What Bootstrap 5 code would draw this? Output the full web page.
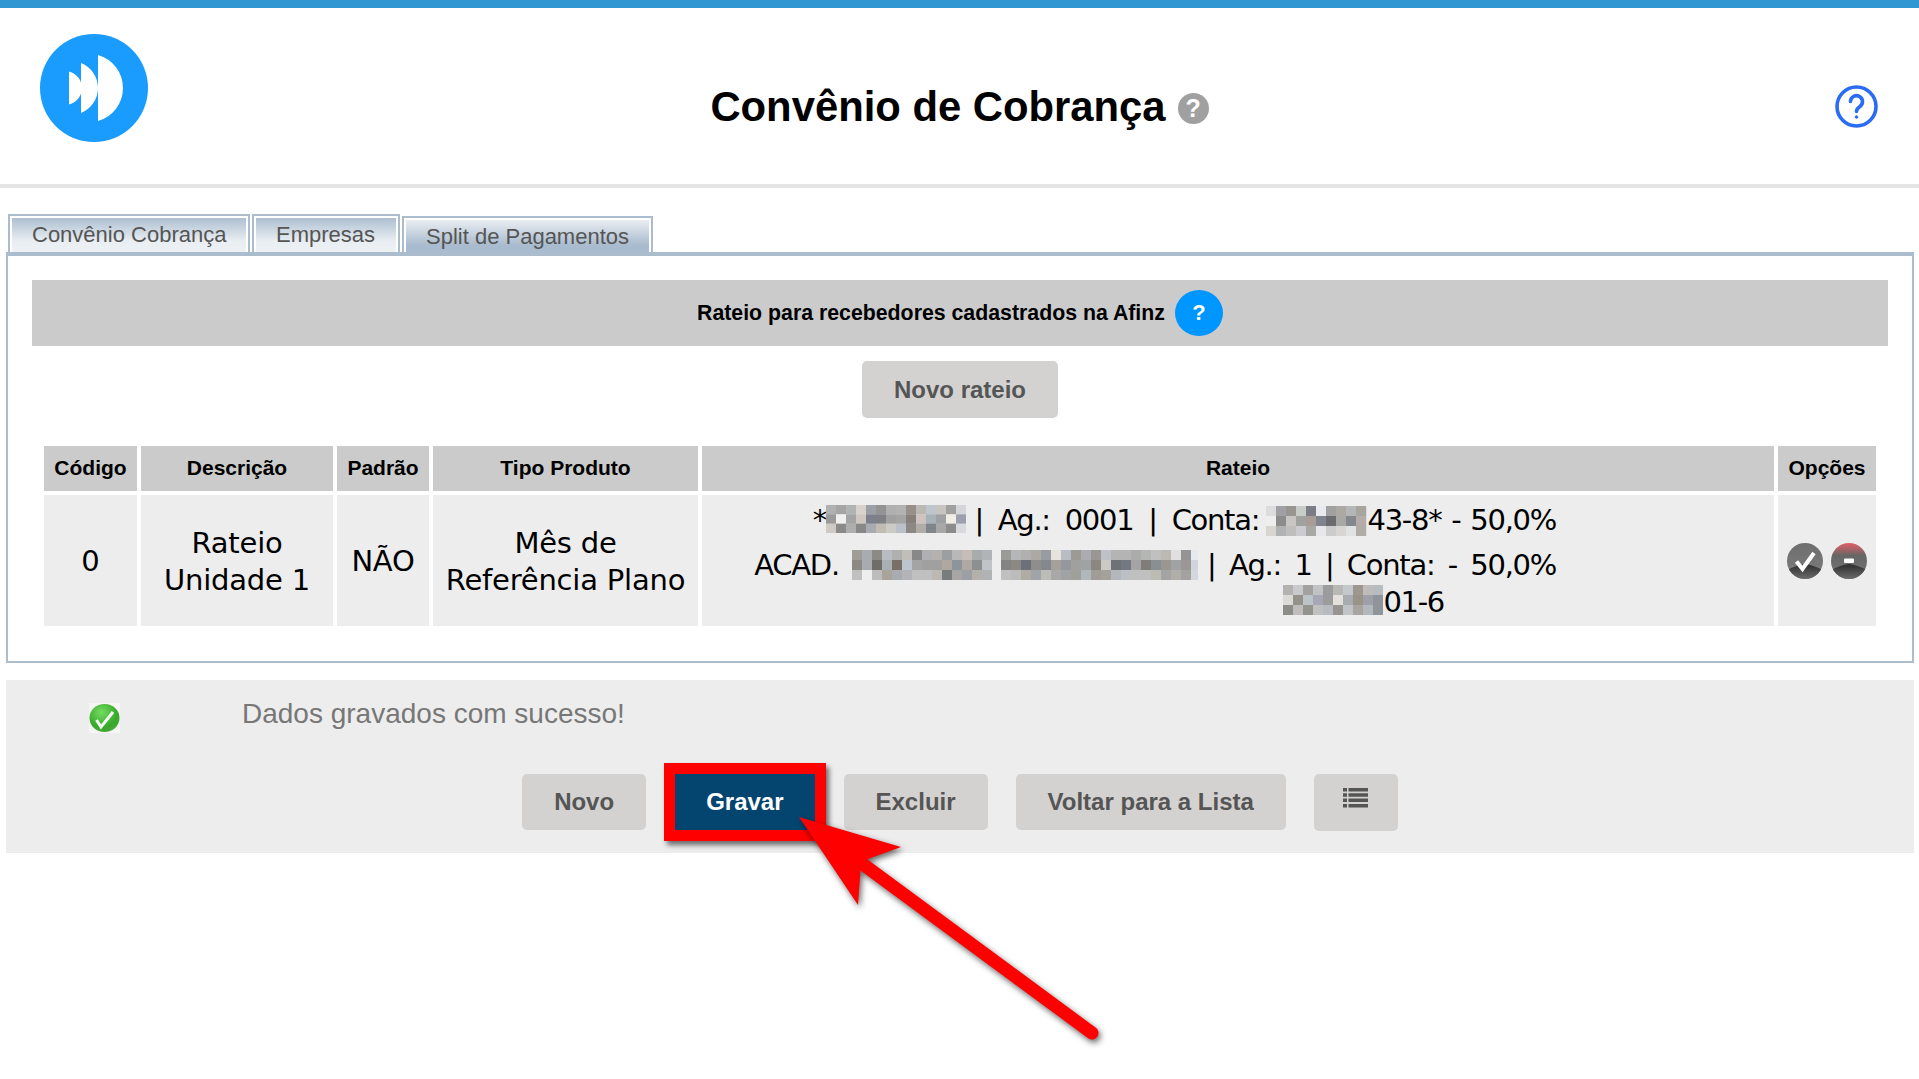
<!DOCTYPE html>
<html lang="pt-BR">
<head>
<meta charset="utf-8">
<title>Convênio de Cobrança</title>
<link href="https://cdn.jsdelivr.net/npm/bootstrap@5.3.0/dist/css/bootstrap.min.css" rel="stylesheet">
<style>
html,body{background:#fff;}
body{margin:0;min-height:1079px;position:relative;font-family:"Liberation Sans",Arial,sans-serif;color:#000;overflow:hidden;}
.faixa-topo{height:8px;background:#3197d3;}
.cabecalho{height:176px;display:grid;grid-template-columns:1fr auto 1fr;border-bottom:0;}
.logo-area{padding:26px 0 0 40px;}
.logo-area svg{display:block;}
.titulo-area{display:flex;align-items:center;gap:12px;padding-top:46px;height:176px;padding-bottom:24px;}
.titulo-area h1{font:700 41.8px/1.2 "Liberation Sans",Arial,sans-serif;margin:0;color:#000;}
.ajuda-cinza{width:31px;height:31px;border-radius:50%;background:#a0a0a0;color:#fff;font:700 25px/31px "Liberation Sans",sans-serif;text-align:center;margin-top:3px;}
.ajuda-area{display:flex;justify-content:flex-end;padding:77px 41px 0 0;}
.ajuda-area svg{display:block;}
.divisor{height:4px;background:#e5e5e5;}
.abas{margin:26px 0 0 8px;gap:2px;align-items:flex-end;flex-wrap:nowrap;height:38px;}
.aba{display:block;height:38px;border:2px solid #abbccd;border-bottom:0;box-shadow:inset 0 2px 0 #fff,inset 2px 0 0 #fff,inset -2px 0 0 #fff;background:linear-gradient(#a9bbce,#e9eef2 70%,#edf1f4);font-size:22px;line-height:38px;color:#555;padding:0 0 0 22px;white-space:nowrap;text-decoration:none;}
.aba-1{width:242px;}
.aba-2{width:148px;}
.aba-ativa{height:36px;width:251px;background:linear-gradient(#eef1f5,#a9bbce 80%);line-height:38px;}
.painel{margin:0 5px 0 6px;border:2px solid #abbccd;border-top-width:4px;padding:24px 24px 31px;}
.barra-titulo{height:66px;background:#cbcbcb;font-weight:700;font-size:21.3px;gap:10px;}
.barra-titulo>span:first-child{padding-top:2px;}
.ajuda-azul{width:48px;height:46px;border-radius:50%;background:#0096ff;color:#fff;font:700 22px/46px "Liberation Sans",sans-serif;text-align:center;}
.botao{height:56px;padding:0 32px;border:0;border-radius:5px;background:#d3d2d0;color:#555;font:700 24px/56px "Liberation Sans",Arial,sans-serif;}
.botao:hover{background:#d3d2d0;color:#555;}
.novo-rateio{height:57px;margin:15px auto 24px;display:block;}
.grade.table{width:1840px;margin:0 8px;border-collapse:separate;border-spacing:4px;table-layout:fixed;}
.grade col:nth-child(1){width:93px;}
.grade col:nth-child(2){width:192px;}
.grade col:nth-child(3){width:92px;}
.grade col:nth-child(4){width:265px;}
.grade col:nth-child(5){width:1072px;}
.grade col:nth-child(6){width:98px;}
.grade.table>:not(caption)>*>*{padding:0;border:0;box-shadow:none;text-align:center;vertical-align:middle;color:#000;}
.grade.table>thead>tr>th{height:45px;background:#cbcbcb;font-size:21px;font-weight:700;line-height:1.2;padding-bottom:2px;}
.grade.table>tbody>tr>td{height:131px;background:#ededed;font-family:"DejaVu Sans",sans-serif;font-size:29px;line-height:37px;letter-spacing:-.2px;}
.grade.table>tbody>tr>td:nth-child(-n+4){padding-top:2px;}
.grade.table>tbody>tr>td.celula-rateio{padding-top:2px;}
.linhas{width:802px;margin-left:52px;text-align:right;white-space:nowrap;letter-spacing:-1.3px;word-spacing:5.5px;}
.linhas p{margin:0;}
.linhas p:first-child{margin-bottom:8px;}
.linhas p:last-child{padding-right:112px;}
.trecho-meio{word-spacing:7px;}
.trecho-fim{word-spacing:2px;}
.mosaico{display:inline-block;}
.mos-a{vertical-align:-3px;margin-right:-5px;}
.mos-d{vertical-align:-6px;margin-left:-7px;}
.mos-b{vertical-align:-5px;}
.mos-c{vertical-align:-5px;margin-left:-5px;margin-right:-4px;}
.mos-e{vertical-align:-3px;}
.opcoes{display:flex;justify-content:center;gap:8px;}
.opcoes svg{display:block;}
.rodape{margin:17px 5px 0 6px;height:173px;background:#ededed;padding-top:23px;}
.mensagem{display:flex;height:71px;padding-left:83px;}
.mensagem svg{display:block;flex:none;}
.mensagem span{margin-left:122px;font-size:28px;line-height:22px;color:#777;}
.acoes{display:flex;justify-content:center;gap:28px;}
.gravar{background:#04456f;color:#fff;padding:0 31px;margin-right:1px;margin-left:1px;box-shadow:0 0 0 11px #f00,3px 4px 5px 11px rgba(0,0,0,.55);border-radius:0;position:relative;}
.gravar:hover{background:#04456f;color:#fff;}
.lista{height:57px;width:84px;padding:0;display:flex;justify-content:center;}
.lista svg{margin-top:14px;}
.seta{position:absolute;left:0;top:0;pointer-events:none;filter:drop-shadow(2px 3px 3px rgba(0,0,0,.6));}
</style>
</head>
<body>
<div class="faixa-topo"></div>
<header class="cabecalho">
  <div class="logo-area">
    <svg width="108" height="108" viewBox="0 0 108 108"><circle cx="54" cy="54" r="54" fill="#1a9bfe"/><path fill="#fff" d="M58 21A34.300 34.300 0 0 1 58 87ZM41 29A26.900 26.900 0 0 1 41 79ZM29 37.500A17 17 0 0 1 29 70.500Z"/></svg>
  </div>
  <div class="titulo-area"><h1>Convênio de Cobrança</h1><div class="ajuda-cinza">?</div></div>
  <div class="ajuda-area">
    <svg width="43" height="43" viewBox="0 0 43 43" fill="none" stroke="#2a6df4" stroke-width="3.600"><circle cx="21.500" cy="21.500" r="19.500"/><path stroke-linecap="round" d="M15.500 16.500a6 6 0 1 1 9.500 5c-2.300 1.500-3.500 2.700-3.500 5"/><circle cx="21.500" cy="32" r="1.300" fill="#2a6df4" stroke-width="1"/></svg>
  </div>
</header>
<div class="divisor"></div>
<ul class="nav abas">
  <li class="nav-item"><a class="aba aba-1" href="#">Convênio Cobrança</a></li>
  <li class="nav-item"><a class="aba aba-2" href="#">Empresas</a></li>
  <li class="nav-item"><a class="aba aba-ativa" href="#">Split de Pagamentos</a></li>
</ul>
<section class="painel">
  <div class="barra-titulo d-flex align-items-center justify-content-center"><span>Rateio para recebedores cadastrados na Afinz</span><span class="ajuda-azul">?</span></div>
  <button type="button" class="btn botao novo-rateio">Novo rateio</button>
  <table class="table grade">
    <colgroup><col><col><col><col><col><col></colgroup>
    <thead><tr><th>Código</th><th>Descrição</th><th>Padrão</th><th>Tipo Produto</th><th>Rateio</th><th>Opções</th></tr></thead>
    <tbody>
      <tr>
        <td>0</td>
        <td>Rateio<br>Unidade 1</td>
        <td>NÃO</td>
        <td>Mês de<br>Referência Plano</td>
        <td class="celula-rateio">
          <div class="linhas">
            <p>*<svg class="mosaico mos-a" data-m="a" width="140" height="28"></svg> <span class="trecho-meio">| Ag.: 0001 | Conta:</span> <svg class="mosaico mos-d" data-m="d" width="102" height="30"></svg><span class="trecho-fim">43-8* - 50,0%</span></p>
            <p>ACAD. <svg class="mosaico mos-b" data-m="b" width="140" height="30"></svg> <svg class="mosaico mos-c" data-m="c" width="197" height="30"></svg> | Ag.: 1 | Conta: - 50,0%</p>
            <p><svg class="mosaico mos-e" data-m="e" width="100" height="30"></svg>01-6</p>
          </div>
        </td>
        <td>
          <div class="opcoes">
            <svg width="36" height="36" viewBox="0 0 36 36"><defs><linearGradient id="gc" x1="0" y1="0" x2="0" y2="1"><stop offset="0" stop-color="#6e6e6e"/><stop offset=".6" stop-color="#777"/><stop offset="1" stop-color="#8a8a8a"/></linearGradient><linearGradient id="gd" x1="0" y1="0" x2="0" y2="1"><stop offset="0" stop-color="#2c2c2c"/><stop offset="1" stop-color="#6c6c6c"/></linearGradient><linearGradient id="gr" x1="0" y1="0" x2="0" y2="1"><stop offset="0" stop-color="#e45f68"/><stop offset=".35" stop-color="#666"/><stop offset="1" stop-color="#777"/></linearGradient><clipPath id="cc"><circle cx="18" cy="18" r="18"/></clipPath></defs><circle cx="18" cy="18" r="18" fill="url(#gc)"/><path clip-path="url(#cc)" fill="url(#gd)" d="M0 27Q10 22 18 21Q26 22 36 27V36H0Z"/><path d="M9.500 18.500L15.500 26L27 10" fill="none" stroke="#fff" stroke-width="4"/></svg>
            <svg width="36" height="36" viewBox="0 0 36 36"><circle cx="18" cy="18" r="18" fill="url(#gr)"/><path clip-path="url(#cc)" fill="url(#gd)" d="M0 27Q10 22 18 21Q26 22 36 27V36H0Z"/><rect x="13" y="15.500" width="10" height="4.500" rx="1" fill="#fff"/></svg>
          </div>
        </td>
      </tr>
    </tbody>
  </table>
</section>
<section class="rodape">
  <div class="mensagem">
    <svg width="31" height="30" viewBox="0 0 31 30"><defs><radialGradient id="gv" cx=".4" cy=".3" r=".75"><stop offset="0" stop-color="#74dc62"/><stop offset=".7" stop-color="#38a82a"/><stop offset="1" stop-color="#4aa83c"/></radialGradient></defs><rect width="31" height="30" fill="#f5f5f3"/><ellipse cx="15.500" cy="15" rx="15" ry="14" fill="url(#gv)"/><path d="M7.500 17l4.500 7L24 9" fill="none" stroke="#f4fbf2" stroke-width="3"/></svg>
    <span>Dados gravados com sucesso!</span>
  </div>
  <div class="acoes">
    <button type="button" class="btn botao">Novo</button>
    <button type="button" class="btn botao gravar">Gravar</button>
    <button type="button" class="btn botao">Excluir</button>
    <button type="button" class="btn botao">Voltar para a Lista</button>
    <button type="button" class="btn botao lista" aria-label="Lista"><svg width="25" height="20" viewBox="0 0 25 20" fill="#555"><path d="M0 0h4v3.500H0zM5.500 0H25v3.500H5.500zM0 5.300h4v3.500H0zM5.500 5.300H25v3.500H5.500zM0 10.600h4v3.500H0zM5.500 10.600H25v3.500H5.500zM0 16h4v3.500H0zM5.500 16H25v3.500H5.500z"/></svg></button>
  </div>
</section>
<svg class="seta" width="1919" height="1079" viewBox="0 0 1919 1079"><path fill="#f00" d="M799 817L901 847L868 859L860.500 870L858 905Z"/><path d="M864 865L1092 1033" stroke="#f00" stroke-width="13" stroke-linecap="round"/></svg>
<script>
var M={
a:["b0b0b0 a5a5a5 b0b4b4 d8d2cc 9ca0a4 939393 b0b0b0 b3b3b3 968f8a bcb8b4 c0c4cc c8c4c0 a0a0a0 d4d6dc","9a9a9a f0f0f0 a4a4a4 cfc8c0 7c808c 7e8084 a0a0a0 a4a4a4 85807a cdc4c0 a8b0b8 a0a0a0 f0ece6 9ca0ac","cfcac6 8a8a8a aeaeae 888888 a8acb0 c0bcb4 cccac6 bcc0c8 8c8884 b0aca8 80858a a8a8a8 8c8c8c d8dade"],
b:["a09c98 a8acb0 8c8a84 b8bcc0 b0b0b0 c0beb8 888888 b0b0b4 b4b2ae 9c9ea0 b8b8b8 c8bcb8 a8acac b0b4b8","8c8884 a8acb0 706c68 a8b0b4 787068 bcc4d0 a4a4a4 a0a0a0 a0a0a0 b0a8a0 8c949c b0a8a0 8c9090 c0c4c8","c0c0c0 eeeeee bcbcbc a8a49c a8acb0 b4b4b8 c0c0c0 c0c0c0 bcb8b4 787c7c a8a6a4 9ca0a4 b4b0ac b0b2b4"],
c:["9a9a96 b4b6b8 b0b0b0 aca8a4 989ca0 e6e2dc b8bcc4 9c9a94 acacb0 9a9692 c0c0c8 b4b4b4 b4b4b4 acacac b4b6b4 c0c0c0 bcb8b4 e0e0e0 949494 e6eaee","848484 8c8884 6c7078 908e8a 84888c a4a09c 94989c a0a09e a0a2a4 8a8680 ccc8c4 6c7278 747880 a4a4a4 807c78 889094 9a9690 a0a2a4 9a9896 d0d4dc","c0c0c0 bcbcbc b0aca4 a0a4a8 bcbcb8 a8a8a8 a0a2a4 a0a09a b0b8bc a09c98 a4a09a b4b8bc bcc0c4 c0c0c0 c0c0c0 bcbcb4 a4a4a4 b0aea8 a4a2a0 d4d8dc"],
d:["dcdcdc a0a0a4 989490 c8ccc8 7c7c84 e8eaf0 a0a0a0 aca8a4 b4b6b8 a8a49e","eeeeee 8c8c8c c8c6c4 a0a2a0 a89c98 80848c 6c6c70 a8a8a4 84888c b4aca8","d8d4d0 b0b2b4 c0bebc ccccd0 a8a8a4 e8e8ec cccccc d8d6d2 e0e2e4 b0aca8"],
e:["b4b2b0 c8cacc a4a2a0 c0c2c4 9c9c9c b8b8b4 c4c8cc 9c9890 c0bcbc b8bcc0","dcdad6 94908a bcc4c8 a8a8b4 9c9c9c e4e0dc a8acb0 9a9488 a0a0a8 90949c","8c8c88 c0bebc 94948e c0c0c0 b8bcc0 989490 c0c4c8 a8a4a0 b4b8bc 90959c"]};
document.querySelectorAll('.mosaico').forEach(function(s){
  var h=+s.getAttribute('height')/3,out='';
  M[s.dataset.m].forEach(function(r,y){r.split(' ').forEach(function(c,x){
    out+='<rect x="'+x*10+'" y="'+y*h+'" width="10.200" height="'+(h+.2)+'" fill="#'+c+'"/>';
  });});
  s.innerHTML=out;
});
</script>
</body>
</html>
